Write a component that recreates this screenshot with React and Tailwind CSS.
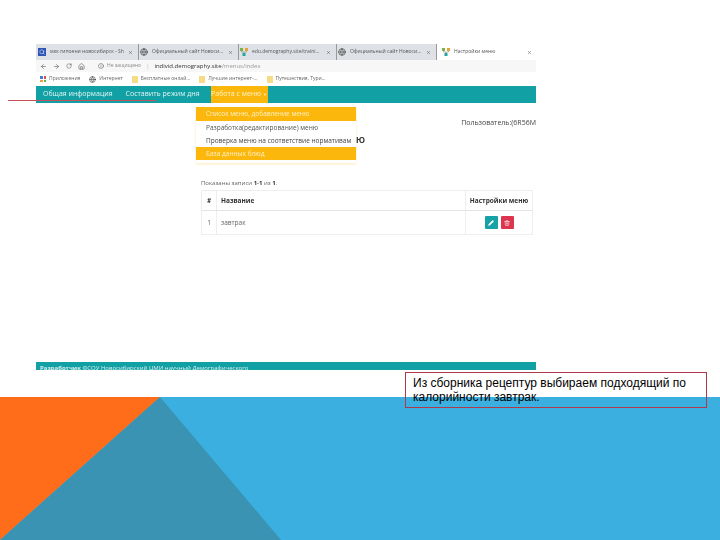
import React from "react";
import { Pencil, Trash2, ArrowLeft, ArrowRight, RotateCw, Home, Info, Globe, Search, X } from "lucide-react";

const tabs = [
  { title: "мкк гипоени новосибирск - Sh", w: "w-[102px]", kind: "search" },
  { title: "Официальный сайт Новосибир", w: "w-[100px]", kind: "globe" },
  { title: "edu.demography.site/training/i", w: "w-[98px]", kind: "tree" },
  { title: "Официальный сайт Новосибир", w: "w-[100px]", kind: "globe" },
];

const bookmarks = [
  { label: "Интернет", kind: "globe" },
  { label: "Бесплатные онлай...", kind: "folder" },
  { label: "Лучшие интернет-...", kind: "folder" },
  { label: "Путешествия, Тури...", kind: "folder" },
];

function TreeIcon() {
  return (
    <svg width="8" height="8" viewBox="0 0 8 8" className="shrink-0">
      <rect x="0" y="0" width="3" height="3" fill="#7cb342" />
      <rect x="5" y="0" width="3" height="3" fill="#e6a23c" />
      <rect x="2.5" y="5" width="3" height="3" fill="#26a69a" />
      <path d="M1.5 3v1h5V3M4 4v1" stroke="#888" strokeWidth="0.6" fill="none" />
    </svg>
  );
}

function TabIcon({ kind }) {
  if (kind === "search") {
    return (
      <span className="w-2 h-2 shrink-0 bg-[#2f55b5] flex items-center justify-center">
        <Search size={6} color="#fff" />
      </span>
    );
  }
  if (kind === "globe") return <Globe size={8} className="shrink-0 text-[#444]" />;
  return <TreeIcon />;
}

function TabStrip() {
  return (
    <div className="h-4 bg-[#dee1e6] flex items-stretch pl-[1px] font-['Open_Sans',sans-serif] text-[5px] text-[#555]">
      {tabs.map((t) => (
        <div key={t.w + t.title} className={`${t.w} flex items-center gap-1 px-[1px] border-r border-[#999] overflow-hidden`}>
          <TabIcon kind={t.kind} />
          <span className="flex-1 truncate">{t.title}</span>
          <X size={5} className="shrink-0 mr-1 text-[#444]" />
        </div>
      ))}
      <div className="flex-1 bg-white flex items-center gap-1 pl-[5px] pr-1">
        <TreeIcon />
        <span className="flex-1">Настройки меню</span>
        <X size={5} className="text-[#444]" />
      </div>
    </div>
  );
}

function AddressBar() {
  return (
    <div className="h-3 bg-[#f7f7f7] flex items-center gap-[6px] pl-[4px] text-[#555]">
      <ArrowLeft size={7} />
      <ArrowRight size={7} />
      <RotateCw size={6} />
      <Home size={7} />
      <div className="flex items-center gap-[3px] ml-[7px] font-['Open_Sans',sans-serif] text-[6px]">
        <Info size={6} />
        <span className="text-[#888] text-[5px]">Не защищено</span>
        <span className="text-[#bbb] mx-[2px]">|</span>
        <span className="text-[#333]">
          individ.demography.site<span className="text-[#999]">/menus/index</span>
        </span>
      </div>
    </div>
  );
}

function BookmarksBar() {
  return (
    <div className="h-[14px] bg-white flex items-center gap-[9px] pl-[4px] font-['Open_Sans',sans-serif] text-[5px] text-[#666]">
      <div className="flex items-center gap-[3px]">
        <span className="w-[6px] h-[6px] grid grid-cols-2 gap-[1px]">
          <i className="bg-[#4a7bd6]" />
          <i className="bg-[#d9534f]" />
          <i className="bg-[#e6a23c]" />
          <i className="bg-[#5cb85c]" />
        </span>
        Приложения
      </div>
      {bookmarks.map((b) => (
        <div key={b.label} className="flex items-center gap-[3px]">
          {b.kind === "globe" ? (
            <Globe size={7} className="text-[#444]" />
          ) : (
            <span className="w-[6px] h-[7px] bg-[#f6dc84]" />
          )}
          {b.label}
        </div>
      ))}
    </div>
  );
}

function NavBar() {
  return (
    <div className="h-[17px] bg-[#11a0a4] flex items-stretch pl-[7px] font-['Open_Sans',sans-serif] text-[7px] text-[#e4f4f4]">
      <div className="flex items-center mr-[13px]">Общая информация</div>
      <div className="flex items-center mr-[11px]">Составить режим дня</div>
      <div className="w-[57px] bg-[#fbb70c] flex items-center justify-center text-[#fff3c8] gap-[2px]">
        Работа с меню
        <span className="text-[4px]">▼</span>
      </div>
    </div>
  );
}

function PageContent() {
  return (
    <div className="flex-1 bg-white flex flex-col font-['Open_Sans',sans-serif] overflow-hidden">
      <div className="h-[26px] flex justify-end items-end pb-[1px]">
        <span className="text-[7px] text-[#444] whitespace-nowrap">Пользователь:(6R56M</span>
      </div>
      <div className="h-[20px] pl-[260px] text-[11px] font-semibold text-[#333] flex items-center whitespace-nowrap">
        ройки меню
      </div>
      <div className="h-[39px] pl-[165px] flex items-end text-[6px] text-[#666]">
        <span>
          Показаны записи <b className="text-[#333]">1-1</b> из <b className="text-[#333]">1</b>.
        </span>
      </div>
      <div className="ml-[165px] mr-[3px] mt-[2px] border border-[#eee] text-[6.5px] text-[#333]">
        <div className="h-5 flex font-bold border-b border-[#e4e4e4]">
          <div className="w-[15px] flex items-center justify-center border-r border-[#eee]">#</div>
          <div className="flex-1 flex items-center pl-[4px] border-r border-[#eee]">Название</div>
          <div className="w-[66px] flex items-center justify-center">Настройки меню</div>
        </div>
        <div className="h-[23px] flex text-[#666]">
          <div className="w-[15px] flex items-center justify-center border-r border-[#eee]">1</div>
          <div className="flex-1 flex items-center pl-[4px] border-r border-[#eee]">завтрак</div>
          <div className="w-[66px] flex items-center justify-center gap-[3px]">
            <span className="w-[13px] h-[13px] rounded-[1px] bg-[#17a2a8] flex items-center justify-center">
              <Pencil size={6} color="#fff" fill="#fff" />
            </span>
            <span className="w-[13px] h-[13px] rounded-[1px] bg-[#dc3550] flex items-center justify-center">
              <Trash2 size={6} color="#fff" />
            </span>
          </div>
        </div>
      </div>
    </div>
  );
}

function Footer() {
  return (
    <div className="h-2 bg-[#11a0a4] overflow-hidden pl-[4px] font-['Open_Sans',sans-serif] text-[6px] leading-[12px] text-[#d8eeee] whitespace-nowrap">
      <b>Разработчик</b> ФСОУ Новосибирский ЦМИ научный Демографического
    </div>
  );
}

function Dropdown() {
  return (
    <div className="absolute left-[160px] top-[63px] w-40 bg-white pb-[3px] font-['Open_Sans',sans-serif] text-[6.5px] shadow-[0_1px_2px_rgba(250,200,80,0.4)]">
      <div className="h-[14px] bg-[#fbb70c] text-[#fff0c0] flex items-center pl-[10px]">Список меню, добавление меню</div>
      <div className="h-[13px] text-[#555] flex items-center pl-[10px]">Разработка(редактирование) меню</div>
      <div className="h-[13px] text-[#444] flex items-center pl-[10px] whitespace-nowrap">Проверка меню на соответствие нормативам</div>
      <div className="h-[13px] bg-[#fbb70c] text-[#fff0c0] flex items-center pl-[10px]">База данных блюд</div>
    </div>
  );
}

function BottomBand() {
  return (
    <svg className="block w-[720px] h-[143px]" viewBox="0 0 720 143">
      <rect width="720" height="143" fill="#3bb0e0" />
      <polygon points="0,0 160,0 0,143" fill="#ff6d1b" />
      <polygon points="160,0 281,143 0,143" fill="#3a93b3" />
    </svg>
  );
}

export default function App() {
  return (
    <div className="relative w-[720px] h-[540px] bg-white overflow-hidden flex flex-col">
      <div className="h-[397px] pt-[44px] pl-[36px]">
        <div className="relative w-[500px] h-[326px] flex flex-col blur-[0.4px]">
          <TabStrip />
          <AddressBar />
          <BookmarksBar />
          <NavBar />
          <PageContent />
          <Footer />
          <Dropdown />
        </div>
      </div>
      <BottomBand />

      <div className="absolute left-2 top-[100px] w-[148px] h-[1px] bg-[#c8505a]" />
      <div className="absolute left-[405px] top-[372px] w-[302px] h-[36px] border border-[#b0384a] px-[7px] font-['Liberation_Sans',sans-serif] text-[12px] leading-[14px] pt-[3px] text-black">
        Из сборника рецептур выбираем подходящий по калорийности завтрак.
      </div>
    </div>
  );
}
